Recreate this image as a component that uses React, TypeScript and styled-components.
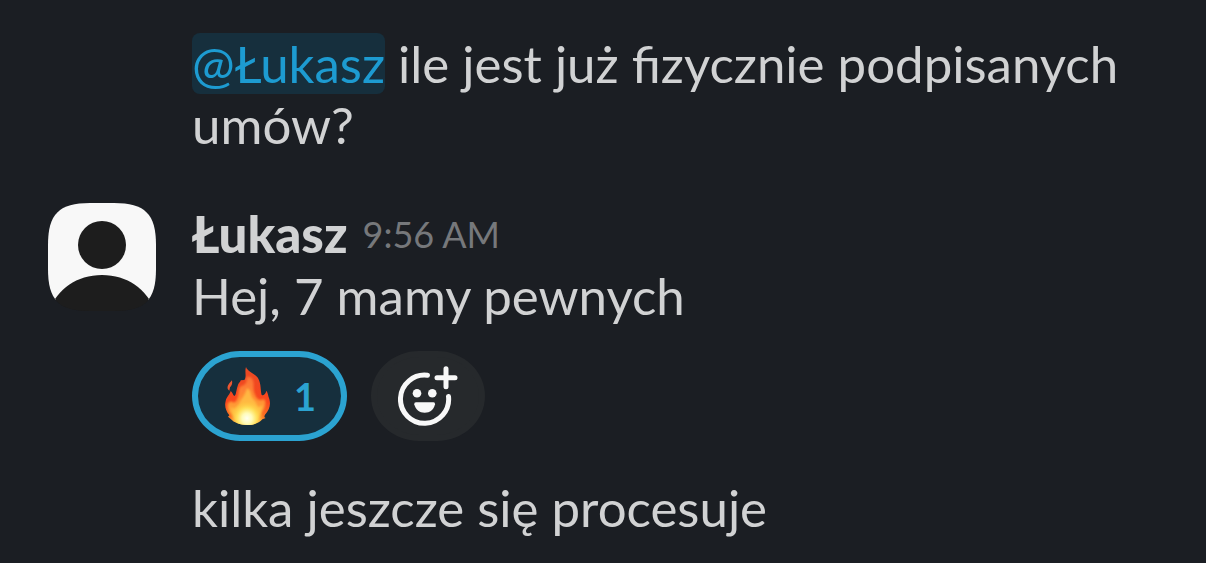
import React from "react";
import styled, { createGlobalStyle } from "styled-components";

const GlobalStyle = createGlobalStyle`
  * { box-sizing: border-box; }
  body {
    margin: 0;
    background: #1b1e23;
    color: #d1d2d3;
    font-family: Lato, "Open Sans", sans-serif;
    font-size: 51px;
    line-height: 61px;
  }
`;

const Thread = styled.main`
  display: flex;
  flex-direction: column;
  padding: 33px 48px 24px;
`;

const Message = styled.article<{ $space?: number }>`
  display: grid;
  grid-template-columns: 108px minmax(0, 1fr);
  column-gap: 36px;
  margin-top: ${(p) => p.$space ?? 0}px;
`;

const Content = styled.div`
  grid-column: 2;
`;

const Text = styled.p`
  margin: 0;
`;

const Mention = styled.a`
  color: #1d9bd1;
  background: #162f3d;
  border-radius: 8px;
  text-decoration: none;
`;

const Avatar = styled.svg`
  display: block;
  width: 108px;
  height: 108px;
`;

const Header = styled.header`
  display: flex;
  align-items: center;
  gap: 15px;
  margin-bottom: 1px;
`;

const Author = styled.strong`
  font-weight: 900;
`;

const Time = styled.time`
  color: #76787b;
  font-size: 36px;
  line-height: 44px;
`;

const Reactions = styled.div`
  display: flex;
  gap: 24px;
  margin-top: 25px;
`;

const Reaction = styled.button<{ $active?: boolean }>`
  display: flex;
  align-items: center;
  justify-content: center;
  gap: 23px;
  height: 90px;
  padding: ${(p) => (p.$active ? "0 25px 0 26px" : "0 21px")};
  border: 6px solid ${(p) => (p.$active ? "#2ba3d1" : "#26292c")};
  border-radius: 48px / 45px;
  background: ${(p) => (p.$active ? "#162f3d" : "#26292c")};
  color: #2ba3d1;
  font-family: inherit;
  font-size: 38px;
  font-weight: 700;
  line-height: 46px;
  cursor: pointer;
`;

const Icon = styled.svg<{ $w: number; $h: number }>`
  display: block;
  flex: none;
  width: ${(p) => p.$w}px;
  height: ${(p) => p.$h}px;
`;

function PersonAvatar() {
  return (
    <Avatar viewBox="0 0 108 108" role="img" aria-label="Łukasz">
      <defs>
        <clipPath id="avatar-shape">
          <path d="M0 42C0 11 11 0 42 0H66C97 0 108 11 108 42V66C108 97 97 108 66 108H42C11 108 0 97 0 66Z" />
        </clipPath>
      </defs>
      <g clipPath="url(#avatar-shape)">
        <rect y="90" width="108" height="18" fill="#1d1d1d" />
        <rect width="108" height="97" fill="#f8f8f8" />
        <circle cx="54" cy="42" r="24" fill="#1d1d1d" />
        <path d="M0 110C8 87 28 72 54 72S100 87 108 110Z" fill="#1d1d1d" />
      </g>
    </Avatar>
  );
}

function Fire() {
  return (
    <Icon $w={47} $h={60} viewBox="135 78 141 180" role="img" aria-label="fire">
      <defs>
        <linearGradient id="fire-outer" x1="0" y1="0" x2="0" y2="1">
          <stop offset="0" stopColor="#e94a24" />
          <stop offset=".6" stopColor="#f8461d" />
          <stop offset=".85" stopColor="#fb7523" />
          <stop offset="1" stopColor="#ffc247" />
        </linearGradient>
        <linearGradient id="fire-middle" x1="0" y1="0" x2="0" y2="1">
          <stop offset="0" stopColor="#fb7137" />
          <stop offset=".45" stopColor="#ff8d32" />
          <stop offset=".8" stopColor="#ffb33c" />
          <stop offset="1" stopColor="#ffe783" />
        </linearGradient>
        <radialGradient id="fire-glow">
          <stop offset="0" stopColor="#fffff0" />
          <stop offset=".3" stopColor="#fffbb8" />
          <stop offset=".6" stopColor="#ffe45c" stopOpacity=".9" />
          <stop offset="1" stopColor="#ffc53a" stopOpacity="0" />
        </radialGradient>
        <filter id="fire-soften" x="-20%" y="-20%" width="140%" height="140%">
          <feGaussianBlur stdDeviation="3" />
        </filter>
        <clipPath id="fire-shape">
          <path d="M201 81C206 96 229 100 238 116C247 132 244 151 248 165C253 168 260 162 262 152C267 158 267 168 271 177C276 194 271 211 258 224C255 230 256 233 260 234L250 238C239 250 222 255 205 255C184 255 164 247 156 238L147 230L151 226C140 212 136 198 140 183C143 169 153 163 155 153C161 157 161 165 166 168C172 165 171 152 176 138C180 126 185 126 185 121L196 120C204 109 196 95 201 81Z" />
        </clipPath>
      </defs>
      <path fill="#ed5630" d="M159 121C161 132 158 137 153 142L151 152C142 146 146 137 151 130Z" />
      <g clipPath="url(#fire-shape)">
        <rect x="135" y="78" width="141" height="180" fill="url(#fire-outer)" />
        <g filter="url(#fire-soften)">
          <path fill="url(#fire-middle)" d="M202 112C207 108 218 109 222 121C226 134 221 146 226 158C230 171 237 181 247 179C253 177 257 176 259 184C261 199 252 211 244 224C235 245 223 258 205 258C183 258 167 242 160 226C150 217 143 203 147 190C151 185 155 181 161 186C169 191 174 181 177 169C182 153 176 142 189 137C202 133 204 124 202 112Z" />
          <path fill="#ffc346" fillOpacity=".8" d="M204 145C217 151 213 164 220 174C226 183 232 186 234 197C238 205 247 199 250 195C248 213 239 231 229 241C215 253 193 252 179 242C167 232 156 216 156 202C166 213 177 200 181 190C186 178 198 168 204 145Z" />
        </g>
        <ellipse cx="204" cy="235" rx="50" ry="52" fill="url(#fire-glow)" />
      </g>
    </Icon>
  );
}

function AddReactionIcon() {
  return (
    <Icon $w={60} $h={60} viewBox="0 0 60 60" aria-hidden="true">
      <g fill="none" stroke="#f8f8f8" strokeWidth="5" strokeLinecap="round">
        <path d="M29.500 9.300A24.100 24.100 0 1 0 50.500 30.500" />
        <path d="M48 2.700V20.700M39 11.700H57" />
      </g>
      <g fill="#f8f8f8">
        <circle cx="19" cy="27.300" r="4.300" />
        <circle cx="34.300" cy="27.300" r="4.300" />
        <path d="M18 36.300H35.500Q37.300 36.300 37 38.300C36 43.500 32 46.800 26.700 46.800S17.400 43.500 16.300 38.300Q16 36.300 18 36.300Z" />
      </g>
    </Icon>
  );
}

export default function App() {
  return (
    <>
      <GlobalStyle />
      <Thread>
        <Message>
          <Content>
            <Text>
              <Mention href="#lukasz">@Łukasz</Mention> ile jest już fizycznie podpisanych umów?
            </Text>
          </Content>
        </Message>
        <Message $space={48}>
          <PersonAvatar />
          <Content>
            <Header>
              <Author>Łukasz</Author>
              <Time dateTime="09:56">9:56 AM</Time>
            </Header>
            <Text>Hej, 7 mamy pewnych</Text>
            <Reactions>
              <Reaction type="button" $active aria-pressed="true">
                <Fire />
                <span>1</span>
              </Reaction>
              <Reaction type="button" aria-label="Add reaction">
                <AddReactionIcon />
              </Reaction>
            </Reactions>
          </Content>
        </Message>
        <Message $space={36}>
          <Content>
            <Text>kilka jeszcze się procesuje</Text>
          </Content>
        </Message>
      </Thread>
    </>
  );
}
